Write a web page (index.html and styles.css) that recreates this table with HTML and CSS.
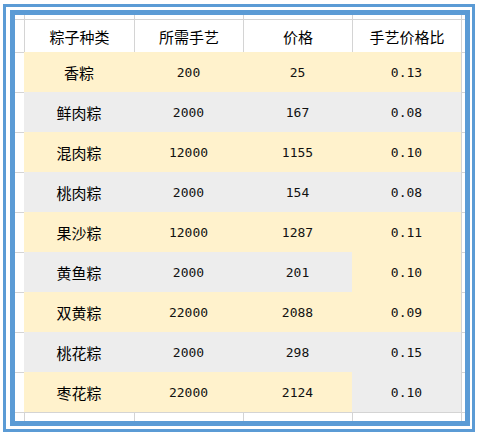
FILE: index.html
```html
<!DOCTYPE html>
<html lang="zh">
<head>
<meta charset="utf-8">
<link rel="stylesheet" href="styles.css">
</head>
<body>
<div class="frame">
  <div class="sheet">
    <div class="row row-top">
      <div class="stub-l"></div><div class="cell"></div><div class="cell"></div><div class="cell"></div><div class="cell"></div><div class="stub-r"></div>
    </div>
    <div class="row row-head">
      <div class="stub-l"></div>
      <div class="cell zh">粽子种类</div>
      <div class="cell zh">所需手艺</div>
      <div class="cell zh">价格</div>
      <div class="cell zh">手艺价格比</div>
      <div class="stub-r"></div>
    </div>
    <div class="row row-data">
      <div class="stub-l"></div>
      <div class="cell y zh">香粽</div><div class="cell y num">200</div><div class="cell y num">25</div><div class="cell y num">0.13</div>
      <div class="stub-r"></div>
    </div>
    <div class="row row-data">
      <div class="stub-l"></div>
      <div class="cell g zh">鲜肉粽</div><div class="cell g num">2000</div><div class="cell g num">167</div><div class="cell g num">0.08</div>
      <div class="stub-r"></div>
    </div>
    <div class="row row-data">
      <div class="stub-l"></div>
      <div class="cell y zh">混肉粽</div><div class="cell y num">12000</div><div class="cell y num">1155</div><div class="cell y num">0.10</div>
      <div class="stub-r"></div>
    </div>
    <div class="row row-data">
      <div class="stub-l"></div>
      <div class="cell g zh">桃肉粽</div><div class="cell g num">2000</div><div class="cell g num">154</div><div class="cell g num">0.08</div>
      <div class="stub-r"></div>
    </div>
    <div class="row row-data">
      <div class="stub-l"></div>
      <div class="cell y zh">果沙粽</div><div class="cell y num">12000</div><div class="cell y num">1287</div><div class="cell y num">0.11</div>
      <div class="stub-r"></div>
    </div>
    <div class="row row-data">
      <div class="stub-l"></div>
      <div class="cell g zh">黄鱼粽</div><div class="cell g num">2000</div><div class="cell g num">201</div><div class="cell y num">0.10</div>
      <div class="stub-r"></div>
    </div>
    <div class="row row-data">
      <div class="stub-l"></div>
      <div class="cell y zh">双黄粽</div><div class="cell y num">22000</div><div class="cell y num">2088</div><div class="cell y num">0.09</div>
      <div class="stub-r"></div>
    </div>
    <div class="row row-data">
      <div class="stub-l"></div>
      <div class="cell g zh">桃花粽</div><div class="cell g num">2000</div><div class="cell g num">298</div><div class="cell g num">0.15</div>
      <div class="stub-r"></div>
    </div>
    <div class="row row-data">
      <div class="stub-l"></div>
      <div class="cell y zh">枣花粽</div><div class="cell y num">22000</div><div class="cell y num">2124</div><div class="cell g num">0.10</div>
      <div class="stub-r"></div>
    </div>
    <div class="row row-bottom">
      <div class="stub-l"></div><div class="cell"></div><div class="cell"></div><div class="cell"></div><div class="cell"></div><div class="stub-r"></div>
    </div>
  </div>
</div>
</body>
</html>
```

FILE: styles.css
```css
html, body {
  margin: 0;
  padding: 0;
  background: #ffffff;
}

body {
  width: 478px;
  height: 438px;
  overflow: hidden;
}

.frame {
  box-sizing: border-box;
  margin: 4px 0 0 3px;
  width: 472px;
  height: 428px;
  border: 3px solid #5b9bd5;
  padding: 3px 2px 3px 4px;
}

.sheet {
  box-sizing: border-box;
  width: 460px;
  height: 416px;
  border: 5px solid #5b9bd5;
  background: #ffffff;
  display: flex;
  flex-direction: column;
}

.row {
  display: flex;
  flex: none;
}

.row-top { height: 4px; }
.row-head { height: 33px; }
.row-data { height: 40px; }
.row-bottom { height: 9px; }

.stub-l,
.stub-r,
.cell {
  box-sizing: border-box;
  flex: none;
  height: 100%;
}

.stub-l { width: 9px; }
.stub-r { width: 4px; border-left: 1px solid #d4d4d4; }

.cell {
  width: 109px;
  border-left: 1px solid #d4d4d4;
  display: flex;
  align-items: center;
  justify-content: center;
  color: #000000;
}

.cell:nth-child(2) { width: 110px; }

.row-head .stub-l,
.row-head .stub-r,
.row-head .cell,
.row-data .stub-l,
.row-data .stub-r,
.row-bottom .stub-l,
.row-bottom .stub-r,
.row-bottom .cell {
  border-top: 1px solid #d4d4d4;
}

.cell.y,
.cell.g {
  border: none;
}

.cell.y { background: #fff2cc; }
.cell.g { background: #ededed; }

.zh {
  font-family: "Noto Sans CJK SC", "Noto Sans CJK JP", sans-serif;
  font-size: 15px;
  line-height: 1;
}

.row-head .zh { padding-top: 1px; }

.num {
  font-family: "DejaVu Sans Mono", monospace;
  font-size: 13px;
  line-height: 1;
  color: #111111;
}
```
